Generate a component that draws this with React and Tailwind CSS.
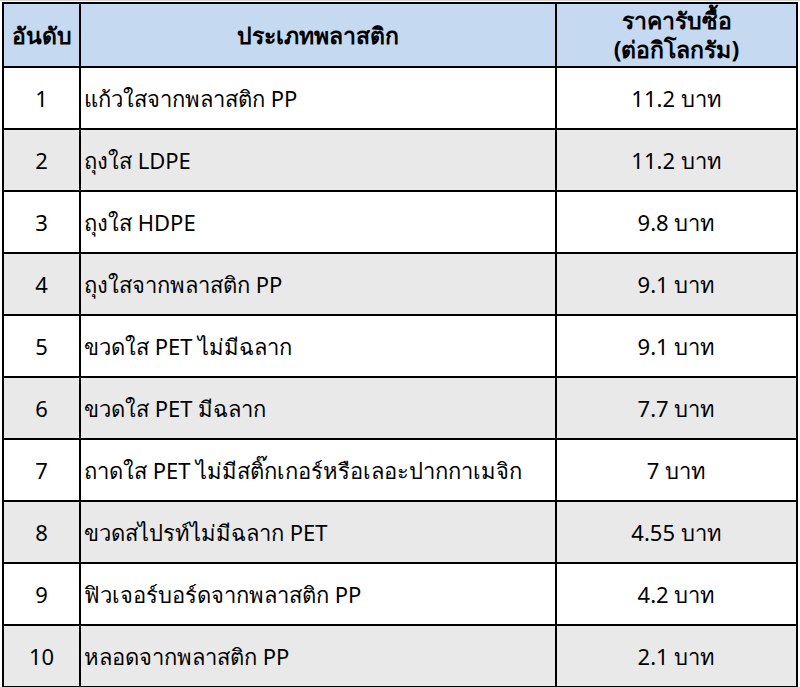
const rows = [
  ['1', 'แก้วใสจากพลาสติก PP', '11.2 บาท'],
  ['2', 'ถุงใส LDPE', '11.2 บาท'],
  ['3', 'ถุงใส HDPE', '9.8 บาท'],
  ['4', 'ถุงใสจากพลาสติก PP', '9.1 บาท'],
  ['5', 'ขวดใส PET ไม่มีฉลาก', '9.1 บาท'],
  ['6', 'ขวดใส PET มีฉลาก', '7.7 บาท'],
  ['7', 'ถาดใส PET ไม่มีสติ๊กเกอร์หรือเลอะปากกาเมจิก', '7 บาท'],
  ['8', 'ขวดสไปรท์ไม่มีฉลาก PET', '4.55 บาท'],
  ['9', 'ฟิวเจอร์บอร์ดจากพลาสติก PP', '4.2 บาท'],
  ['10', 'หลอดจากพลาสติก PP', '2.1 บาท'],
];

export default function App() {
  return (
    <div
      className="w-[800px] h-[687px] bg-white overflow-hidden pt-[2px] pl-[2px] text-black border-t border-[#d4d4d4]"
      style={{ fontFamily: 'Tahoma, "Noto Sans", "DejaVu Sans", sans-serif' }}
    >
      <table className="border-collapse w-[794px] table-fixed -mt-px">
        <colgroup>
          <col className="w-[77px]" />
          <col className="w-[476px]" />
          <col className="w-[241px]" />
        </colgroup>
        <thead>
          <tr className="h-[64px] bg-[#c5d9f1] text-[23px] font-bold leading-[29px]">
            <th className="border-2 border-black">อันดับ</th>
            <th className="border-2 border-black">ประเภทพลาสติก</th>
            <th className="border-2 border-black">
              <div>ราคารับซื้อ</div>
              <div>(ต่อกิโลกรัม)</div>
            </th>
          </tr>
        </thead>
        <tbody>
          {rows.map(([n, name, price], i) => (
            <tr key={n} className={`h-[62px] text-[22px] ${i % 2 ? 'bg-[#e9e9e9]' : 'bg-white'}`}>
              <td className="border-2 border-black text-center">{n}</td>
              <td className="border-2 border-black pl-[3px] whitespace-nowrap">{name}</td>
              <td className="border-2 border-black text-center">{price}</td>
            </tr>
          ))}
        </tbody>
      </table>
    </div>
  );
}
